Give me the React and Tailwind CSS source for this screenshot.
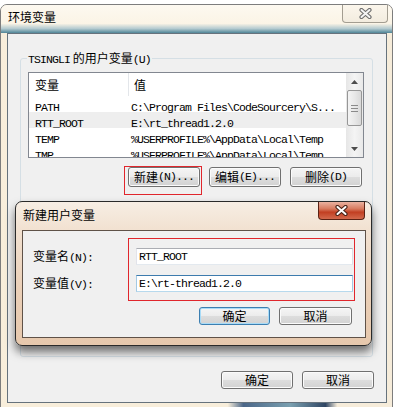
import React from 'react';

const MONO = "font-['Liberation_Mono','Noto_Sans_CJK_SC',monospace] text-[11.5px] tracking-[-0.9px]";

const Mono = ({ children }) => <span className={MONO}>{children}</span>;

const Button = ({ children, def = false, className = '' }) => (
  <div
    className={`flex items-center justify-center rounded-[3px] border text-[12px] leading-none text-black bg-[linear-gradient(to_bottom,#f5f5f5_0%,#ececec_48%,#dddddd_52%,#d2d2d2_100%)] ${
      def
        ? 'border-[#3c7fb1] shadow-[inset_0_0_0_1px_#a8dbf7]'
        : 'border-[#707070] shadow-[inset_0_0_0_1px_#fbfbfb]'
    } ${className}`}
  >
    {children}
  </div>
);

const CloseX = ({ outline, fill, w = 13, h = 11 }) => (
  <svg width={w} height={h} viewBox="0 0 13 11">
    <path d="M2.5 2 L10.5 9 M10.5 2 L2.5 9" stroke={outline} strokeWidth="4.2" strokeLinecap="round" />
    <path d="M2.5 2 L10.5 9 M10.5 2 L2.5 9" stroke={fill} strokeWidth="2" strokeLinecap="round" />
  </svg>
);

const rows = [
  ['PATH', 'C:\\Program Files\\CodeSourcery\\S...'],
  ['RTT_ROOT', 'E:\\rt_thread1.2.0', true],
  ['TEMP', '%USERPROFILE%\\AppData\\Local\\Temp'],
  ['TMP', '%USERPROFILE%\\AppData\\Local\\Temp'],
];

const Arrow = ({ up }) => (
  <svg width="7" height="4" viewBox="0 0 7 4">
    <path d={up ? 'M0 4 L3.5 0 L7 4 Z' : 'M0 0 L3.5 4 L7 0 Z'} fill="#4d4d4d" />
  </svg>
);

const ScrollBar = () => (
  <div className="flex w-[17px] flex-col items-center bg-[linear-gradient(to_right,#e6e6e6,#f4f4f4_50%,#e9e9e9)]">
    <div className="flex h-[17px] items-center justify-center">
      <Arrow up />
    </div>
    <div className="flex h-[36px] w-[15px] flex-col items-center justify-center gap-[2px] rounded-[2px] border border-[#979797] bg-[linear-gradient(to_right,#f4f4f4,#e8e8e8_50%,#d9d9d9)]">
      <div className="h-px w-[7px] bg-[#8a8a8a]" />
      <div className="h-px w-[7px] bg-[#8a8a8a]" />
      <div className="h-px w-[7px] bg-[#8a8a8a]" />
    </div>
    <div className="flex-1" />
    <div className="flex h-[17px] items-center justify-center">
      <Arrow />
    </div>
  </div>
);

const VarList = () => (
  <div className="ml-[7px] mt-[13px] flex h-[86px] w-[336px] border border-[#828790] bg-white">
    <div className="flex-1 overflow-hidden">
      <div className="flex h-[23px] items-center text-[12px]">
        <div className="flex h-full w-[100px] items-center border-r border-[#e3e6ea] pl-[6px]">变量</div>
        <div className="pl-[5px]">值</div>
      </div>
      {rows.map(([name, value, hi]) => (
        <div key={name} className={`flex h-[16px] items-center ${hi ? 'bg-[#eeeeee]' : ''}`}>
          <div className="w-[101px] pl-[6px] whitespace-nowrap">
            <Mono>{name}</Mono>
          </div>
          <div className="whitespace-nowrap pl-[1px]">
            <Mono>{value}</Mono>
          </div>
        </div>
      ))}
    </div>
    <ScrollBar />
  </div>
);

const NewVarDialog = () => (
  <div className="absolute left-[15px] top-[201px] flex h-[145px] w-[357px] flex-col rounded-[7px] border border-[#2a2a2a] bg-[linear-gradient(to_bottom,#f7eee4_0%,#f2e2d2_18%,#ebd0b8_60%,#e6c8ad_100%)] shadow-[0_6px_10px_rgba(0,0,0,0.55)]">
    <div className="flex h-[28px] items-start justify-between">
      <span className="pl-[7px] pt-[6px] text-[12px] leading-[14px]">新建用户变量</span>
      <div className="mr-[6px] flex h-[18px] w-[47px] items-center justify-center rounded-b-[4px] border border-t-0 border-[#5b2214] bg-[linear-gradient(to_bottom,#eab2a0_0%,#d77a5f_40%,#c23f22_60%,#d3694c_100%)]">
        <CloseX outline="#4a2418" fill="#ffffff" />
      </div>
    </div>
    <div className="relative ml-[6px] h-[108px] w-[344px] border border-[#5f5248] bg-[#f0f0f0] pt-[17px]">
      <div className="flex h-[17px] items-center">
        <div className="w-[113px] pl-[10px] text-[12px] leading-none">
          变量名<Mono>(N):</Mono>
        </div>
        <div className="flex h-[17px] w-[217px] items-center border border-[#abadb3] border-b-[#e3e9ef] border-l-[#e2e3ea] border-r-[#dbdfe6] bg-white pl-[2px]">
          <Mono>RTT_ROOT</Mono>
        </div>
      </div>
      <div className="mt-[10px] flex h-[17px] items-center">
        <div className="w-[113px] pl-[10px] text-[12px] leading-none">
          变量值<Mono>(V):</Mono>
        </div>
        <div className="flex h-[17px] w-[217px] items-center border border-[#3d7bad] border-b-[#b7d9ed] border-l-[#a4c9e3] border-r-[#a4c9e3] bg-white pl-[2px]">
          <Mono>E:\rt-thread1.2.0</Mono>
        </div>
      </div>
      <div className="ml-[176px] mt-[15px] flex gap-[9px]">
        <Button def className="h-[18px] w-[71px]">确定</Button>
        <Button className="h-[18px] w-[73px]">取消</Button>
      </div>
      <div className="absolute left-[105px] top-[7px] h-[63px] w-[227px] border border-[#e0262c]" />
    </div>
  </div>
);

export default function App() {
  return (
    <div className="relative h-[407px] w-[395px] overflow-hidden bg-white font-['Noto_Sans_CJK_SC','Liberation_Sans',sans-serif] text-black">
      <div className="absolute left-0 top-[4px] flex h-[404px] w-[393px] flex-col rounded-t-[7px] border border-[#7d7d7d] bg-[linear-gradient(to_right,#f8eedb,#fcf7ec_40%,#f6ecda)]">
        <div className="flex h-[28px] items-start justify-between rounded-t-[6px] bg-[linear-gradient(to_bottom,#fdf9f0_0%,#fbf4e6_66%,#b5cbd0_84%,#4f8597_100%)]">
          <span className="pl-[7px] pt-[5px] text-[12px] leading-[14px]">环境变量</span>
          <div className="mr-[4px] flex h-[18px] w-[46px] items-center justify-center rounded-b-[4px] border border-t-0 border-[#a39d91] bg-[linear-gradient(to_bottom,#fbf6ec,#f3ecdf)]">
            <CloseX outline="#6e6e6e" fill="#f4f4f4" />
          </div>
        </div>
        <div className="ml-[6px] h-[370px] w-[380px] border border-[#66727c] bg-[#f0f0f0]">
          <div className="relative ml-[12px] mt-[24px] h-[299px] w-[353px] rounded-[3px] border border-[#d5dfe5]">
            <span className="absolute left-[6px] top-[-8px] bg-[#f0f0f0] px-[1px] text-[12px] leading-[14px] whitespace-nowrap">
              <Mono>TSINGLI</Mono> 的用户变量<Mono>(U)</Mono>
            </span>
            <VarList />
            <div className="ml-[107px] mt-[9px] flex gap-[9px]">
              <Button className="h-[20px] w-[72px]">
                新建<Mono>(N)...</Mono>
              </Button>
              <Button className="h-[20px] w-[72px]">
                编辑<Mono>(E)...</Mono>
              </Button>
              <Button className="h-[20px] w-[72px]">
                删除<Mono>(D)</Mono>
              </Button>
            </div>
            <div className="absolute left-[103px] top-[107px] h-[29px] w-[78px] border border-[#e0262c]" />
          </div>
          <div className="mt-[14px] flex justify-end gap-[9px] pr-[12px]">
            <Button className="h-[18px] w-[72px]">确定</Button>
            <Button className="h-[18px] w-[72px]">取消</Button>
          </div>
        </div>
        <div className="flex-1 bg-[linear-gradient(to_right,#f8eedb_58%,#4a6688_62%,#7aa0b0_74%,#2f4563_83%,#f6ecda_86%)]" />
      </div>
      <NewVarDialog />
    </div>
  );
}
